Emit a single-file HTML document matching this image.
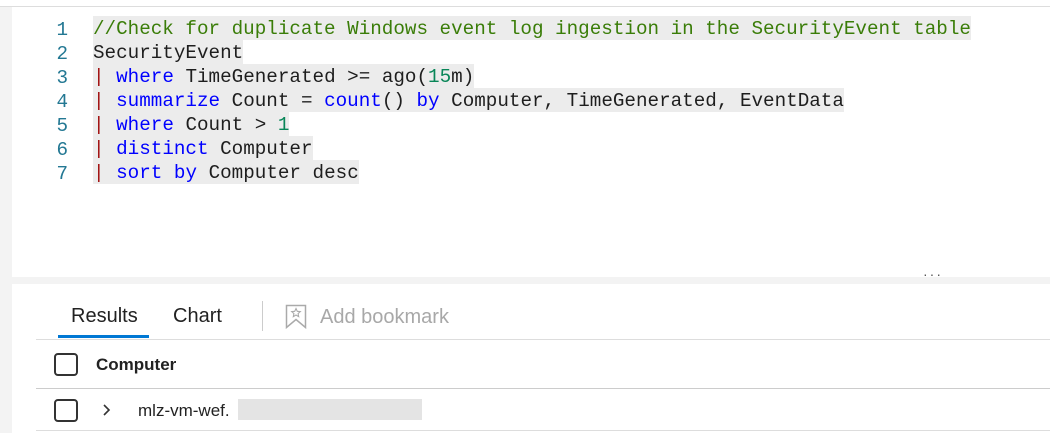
<!DOCTYPE html>
<html><head><style>
*{margin:0;padding:0;box-sizing:border-box}
body{width:1050px;height:433px;background:#fff;position:relative;overflow:hidden;font-family:"Liberation Sans",sans-serif}
.abs{position:absolute}
.code{font-family:"Liberation Mono",monospace;font-size:19.25px;white-space:pre;color:#1e1e1e}
.ln{position:absolute;left:40px;width:28px;text-align:right;color:#237893;font-family:"Liberation Mono",monospace;font-size:19.25px;line-height:24px}
.line{position:absolute;left:93px;height:24px;line-height:26px;background:#ececec}
.k{color:#0000ff}.c{color:#3a7d08}.n{color:#098658}.p{color:#a31515}
.cb{position:absolute;width:24px;height:23px;border:2px solid #333;border-radius:4px}
</style></head><body>
<div class="abs" style="left:0;top:6px;width:1050px;height:1px;background:#ddd"></div>
<div class="abs" style="left:0;top:7px;width:12px;height:426px;background:#f3f3f3"></div>
<div class="abs" style="left:12px;top:277px;width:1038px;height:7px;background:#f3f3f3"></div>
<div class="abs" style="left:923px;top:266px;color:#555;font-size:14px;letter-spacing:2px">···</div>

<div class="ln" style="top:18px">1</div>
<div class="ln" style="top:42px">2</div>
<div class="ln" style="top:66px">3</div>
<div class="ln" style="top:90px">4</div>
<div class="ln" style="top:114px">5</div>
<div class="ln" style="top:138px">6</div>
<div class="ln" style="top:162px">7</div>

<div class="line code" style="top:16px"><span class="c">//Check for duplicate Windows event log ingestion in the SecurityEvent table</span></div>
<div class="line code" style="top:40px">SecurityEvent</div>
<div class="line code" style="top:64px"><span class="p">|</span> <span class="k">where</span> TimeGenerated &gt;= ago(<span class="n">15</span>m)</div>
<div class="line code" style="top:88px"><span class="p">|</span> <span class="k">summarize</span> Count = <span class="k">count</span>() <span class="k">by</span> Computer, TimeGenerated, EventData</div>
<div class="line code" style="top:112px"><span class="p">|</span> <span class="k">where</span> Count &gt; <span class="n">1</span></div>
<div class="line code" style="top:136px"><span class="p">|</span> <span class="k">distinct</span> Computer</div>
<div class="line code" style="top:160px"><span class="p">|</span> <span class="k">sort</span> <span class="k">by</span> Computer desc</div>

<div class="abs" style="left:71px;top:305px;font-size:20px;color:#222">Results</div>
<div class="abs" style="left:58px;top:335px;width:91px;height:3px;background:#0078d4"></div>
<div class="abs" style="left:173px;top:305px;font-size:20px;color:#222">Chart</div>
<div class="abs" style="left:262px;top:301px;width:1px;height:30px;background:#ccc"></div>
<svg class="abs" style="left:285px;top:304px" width="22" height="25" viewBox="0 0 22 25"><path d="M1.5 1.5H20.5V23.5L11 15.5L1.5 23.5Z" fill="none" stroke="#aaa" stroke-width="1.5"/><path d="M11 4.5l1.3 2.8 3 .3-2.2 2 .6 3L11 11l-2.7 1.6.6-3-2.2-2 3-.3z" fill="none" stroke="#aaa" stroke-width="1.1"/></svg>
<div class="abs" style="left:320px;top:306px;font-size:20px;color:#a8a8a8">Add bookmark</div>
<div class="abs" style="left:36px;top:339px;width:1014px;height:1px;background:#ddd"></div>

<div class="cb" style="left:54px;top:353px"></div>
<div class="abs" style="left:96px;top:355px;font-size:17px;font-weight:bold;color:#222">Computer</div>
<div class="abs" style="left:36px;top:388px;width:1014px;height:1px;background:#ccc"></div>

<div class="cb" style="left:54px;top:399px"></div>
<svg class="abs" style="left:102px;top:403px" width="10" height="14"><path d="M2 2l5 5-5 5" fill="none" stroke="#333" stroke-width="1.6"/></svg>
<div class="abs" style="left:138px;top:401px;font-size:17px;color:#222">mlz-vm-wef.</div>
<div class="abs" style="left:238px;top:399px;width:184px;height:21px;background:#e4e4e4"></div>
<div class="abs" style="left:36px;top:430px;width:1014px;height:1px;background:#ddd"></div>
</body></html>
